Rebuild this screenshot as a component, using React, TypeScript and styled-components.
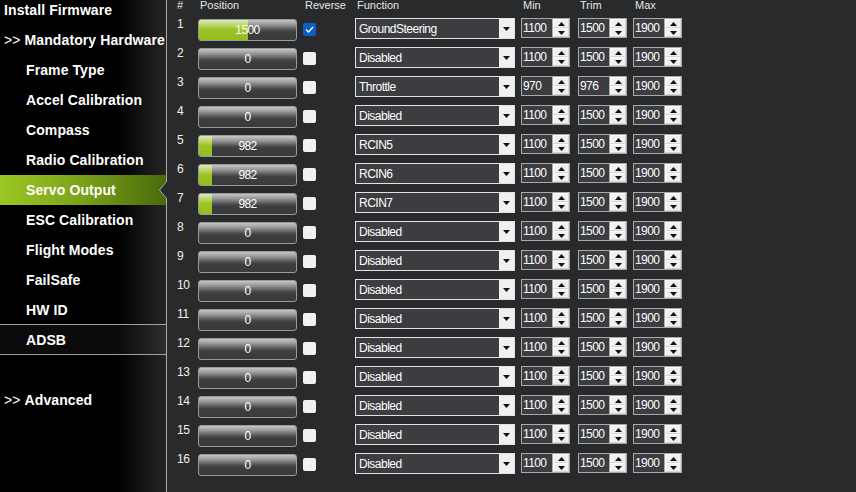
import React from 'react';
import styled, {createGlobalStyle} from 'styled-components';

const GlobalStyle = createGlobalStyle`
  html, body {
    margin: 0;
    padding: 0;
    background: #292a2c;
    overflow: hidden;
  }
  body {
    font-family: "Liberation Sans", Arial, sans-serif;
  }
`;

const Screen = styled.div`
  display: flex;
  width: 856px;
  height: 492px;
  overflow: hidden;
  background: #292a2c;
`;

const Sidebar = styled.nav`
  position: relative;
  width: 166px;
  flex-shrink: 0;
  border-right: 1px solid #a8a8a8;
  background: linear-gradient(to right, #000 0, #000 118px, #252525 166px);
`;

const MenuList = styled.ul`
  list-style: none;
  margin: -5px 0 0;
  padding: 0;
`;

const MenuItem = styled.li<{$indent?: boolean; $active?: boolean; $shaded?: boolean; $ruled?: boolean}>`
  position: relative;
  display: flex;
  align-items: center;
  height: ${(p) => (p.$ruled ? 29 : 30)}px;
  padding-left: ${(p) => (p.$indent ? 26 : 4)}px;
  color: #fff;
  font-size: 14px;
  font-weight: bold;
  letter-spacing: 0.1px;
  white-space: nowrap;
  border-bottom: ${(p) => (p.$ruled ? '1px solid #a0a0a0' : 'none')};
  background: ${(p) =>
    p.$active ?
      'linear-gradient(to right, #9cc623 0%, #7fa51a 45%, #4a6a0b 100%)' :
      p.$shaded ? 'rgba(255, 255, 255, 0.045)' : 'transparent'};
`;

const Prefix = styled.span`
  margin-right: 4px;
  font-weight: normal;
`;

const Notch = styled.svg`
  position: absolute;
  right: -1px;
  top: 6px;
`;

const Content = styled.main`
  flex: 1;
  color: #fff;
`;

const COLUMNS = '31px 99px 58px 166px 57px 55px 49px';

const HeaderRow = styled.div`
  display: grid;
  grid-template-columns: ${COLUMNS};
  height: 16px;
  font-size: 11px;
  line-height: 11px;
  color: #e6e6e6;
`;

const HeaderCell = styled.div<{$pad?: number}>`
  padding-left: ${(p) => p.$pad ?? 2}px;
`;

const Row = styled.div`
  display: grid;
  grid-template-columns: ${COLUMNS};
  height: 29px;
  align-items: start;
`;

const RowNumber = styled.div`
  padding: 2px 0 0 10px;
  font-size: 12px;
  line-height: 12px;
  letter-spacing: -0.4px;
  color: #f0f0f0;
`;

const Bar = styled.div`
  position: relative;
  margin-top: 3px;
  width: 99px;
  height: 22px;
  box-sizing: border-box;
  border: 1px solid #9a9a9a;
  border-radius: 3px;
  overflow: hidden;
  background: linear-gradient(#c6c6c6 0%, #9a9a9a 22%, #555 48%, #3e3e3e 60%, #3a3a3a 100%);
`;

const BarFill = styled.div`
  height: 100%;
  background: linear-gradient(#dfeabf 0%, #bcd76a 25%, #9cc426 48%, #93bd1c 100%);
`;

const BarValue = styled.span`
  position: absolute;
  inset: 0;
  display: flex;
  align-items: center;
  justify-content: center;
  font-size: 12px;
  letter-spacing: -0.6px;
  color: #fff;
`;

const CheckBox = styled.div<{$checked?: boolean}>`
  margin: 7px 0 0 6px;
  width: 13px;
  height: 13px;
  border-radius: 2px;
  display: flex;
  align-items: center;
  justify-content: center;
  background: ${(p) => (p.$checked ? '#0c5fc9' : '#f1f1f1')};
`;

const Select = styled.div`
  display: flex;
  margin-top: 2px;
  width: 160px;
  height: 21px;
  box-sizing: border-box;
  border: 1px solid #e2e2e2;
  background: #3c3d40;
`;

const SelectText = styled.span`
  flex: 1;
  padding-left: 3px;
  font-size: 12px;
  letter-spacing: -0.5px;
  line-height: 20px;
  color: #fff;
`;

const SelectArrow = styled.span`
  width: 15px;
  display: flex;
  align-items: center;
  justify-content: center;
  background: #f0f0f0;
`;

const Spin = styled.div`
  display: flex;
  margin-top: 2px;
  width: 49px;
  height: 20px;
  box-sizing: border-box;
  border: 1px solid #a9a9a9;
  background: #3c3d40;
`;

const SpinText = styled.span`
  flex: 1;
  padding-left: 1px;
  font-size: 12px;
  letter-spacing: -0.6px;
  line-height: 18px;
  color: #fff;
`;

const SpinButtons = styled.div`
  width: 16px;
  display: flex;
  flex-direction: column;
  background: #f0f0f0;
  border-left: 1px solid #a9a9a9;
`;

const SpinButton = styled.div`
  flex: 1;
  display: flex;
  align-items: center;
  justify-content: center;
  border: 1px solid #fcfcfc;
  border-right-color: #d6d6d6;
  border-bottom-color: #d6d6d6;
`;

interface Servo {
  position: number,
  reverse?: boolean,
  fn: string,
  min: number,
  trim: number,
  max: number
}

const servos: Servo[] = [
  {position: 1500, reverse: true, fn: 'GroundSteering', min: 1100, trim: 1500, max: 1900},
  {position: 0, fn: 'Disabled', min: 1100, trim: 1500, max: 1900},
  {position: 0, fn: 'Throttle', min: 970, trim: 976, max: 1900},
  {position: 0, fn: 'Disabled', min: 1100, trim: 1500, max: 1900},
  {position: 982, fn: 'RCIN5', min: 1100, trim: 1500, max: 1900},
  {position: 982, fn: 'RCIN6', min: 1100, trim: 1500, max: 1900},
  {position: 982, fn: 'RCIN7', min: 1100, trim: 1500, max: 1900},
  ...Array.from({length: 9}, () => ({position: 0, fn: 'Disabled', min: 1100, trim: 1500, max: 1900}))
];

const menu = [
  {label: 'Install Firmware'},
  {label: 'Mandatory Hardware', prefix: true},
  {label: 'Frame Type', indent: true},
  {label: 'Accel Calibration', indent: true},
  {label: 'Compass', indent: true},
  {label: 'Radio Calibration', indent: true},
  {label: 'Servo Output', indent: true, active: true},
  {label: 'ESC Calibration', indent: true},
  {label: 'Flight Modes', indent: true},
  {label: 'FailSafe', indent: true},
  {label: 'HW ID', indent: true, ruled: true},
  {label: 'ADSB', indent: true, ruled: true, shaded: true},
  {label: ''},
  {label: 'Advanced', prefix: true}
];

const fillPercent = (value: number) => Math.max(0, Math.min(1, (value - 800) / 1400)) * 100;

const Arrow = ({up}: {up?: boolean}) => (
  <svg width="7" height="4" viewBox="0 0 7 4">
    <polygon points={up ? '3.5,0 7,4 0,4' : '0,0 7,0 3.5,4'} fill="#111" />
  </svg>
);

const SpinBox = ({value}: {value: number}) => (
  <Spin>
    <SpinText>{value}</SpinText>
    <SpinButtons>
      <SpinButton><Arrow up /></SpinButton>
      <SpinButton><Arrow /></SpinButton>
    </SpinButtons>
  </Spin>
);

const App: React.FunctionComponent = () => (
  <Screen>
    <GlobalStyle />
    <Sidebar>
      <MenuList>
        {menu.map((item, i) => (
          <MenuItem key={i} $indent={item.indent} $active={item.active} $shaded={item.shaded} $ruled={item.ruled}>
            {item.prefix && <Prefix>&gt;&gt;</Prefix>}
            {item.label}
            {item.active &&
              <Notch width="8" height="18" viewBox="0 0 8 18">
                <polygon points="8,0 0.5,9 8,18" fill="#292a2c" />
                <polyline points="8,0 0.5,9 8,18" fill="none" stroke="#a8a8a8" strokeWidth="1" />
              </Notch>
            }
          </MenuItem>
        ))}
      </MenuList>
    </Sidebar>
    <Content>
      <HeaderRow>
        <HeaderCell $pad={10}>#</HeaderCell>
        <HeaderCell>Position</HeaderCell>
        <HeaderCell $pad={8}>Reverse</HeaderCell>
        <HeaderCell>Function</HeaderCell>
        <HeaderCell>Min</HeaderCell>
        <HeaderCell>Trim</HeaderCell>
        <HeaderCell>Max</HeaderCell>
      </HeaderRow>
      {servos.map((servo, i) => (
        <Row key={i}>
          <RowNumber>{i + 1}</RowNumber>
          <Bar>
            <BarFill style={{width: `${fillPercent(servo.position)}%`}} />
            <BarValue>{servo.position}</BarValue>
          </Bar>
          <CheckBox $checked={servo.reverse}>
            {servo.reverse &&
              <svg width="9" height="7" viewBox="0 0 9 7">
                <polyline points="1,3.5 3.5,6 8,1" fill="none" stroke="#fff" strokeWidth="1.3" />
              </svg>
            }
          </CheckBox>
          <Select>
            <SelectText>{servo.fn}</SelectText>
            <SelectArrow>
              <svg width="7" height="4" viewBox="0 0 7 4">
                <polygon points="0,0 7,0 3.5,4" fill="#111" />
              </svg>
            </SelectArrow>
          </Select>
          <SpinBox value={servo.min} />
          <SpinBox value={servo.trim} />
          <SpinBox value={servo.max} />
        </Row>
      ))}
    </Content>
  </Screen>
);

export default App;
